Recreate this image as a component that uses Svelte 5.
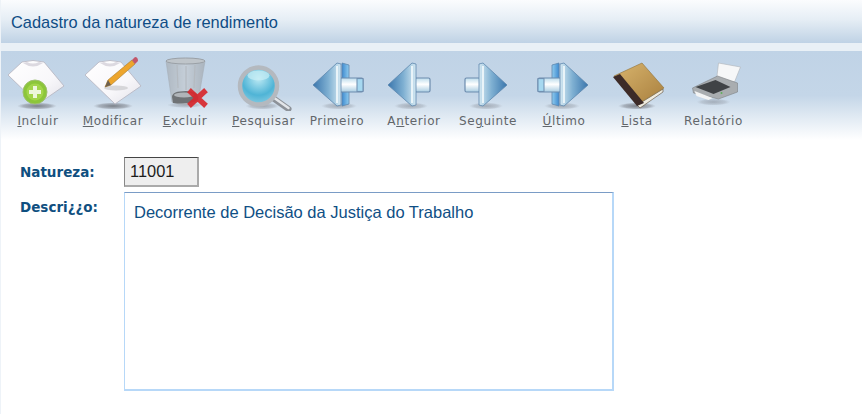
<script>
  // x = centre of the tool on the page, key = index of the underlined letter
  const tools = [
    { label: 'Incluir', x: 38, key: 0, icon: 'add' },
    { label: 'Modificar', x: 113, key: 0, icon: 'edit' },
    { label: 'Excluir', x: 185, key: 0, icon: 'trash' },
    { label: 'Pesquisar', x: 263.5, key: 0, icon: 'search' },
    { label: 'Primeiro', x: 337, key: -1, icon: 'first' },
    { label: 'Anterior', x: 414, key: 1, icon: 'prev' },
    { label: 'Seguinte', x: 488, key: 2, icon: 'next' },
    { label: 'Último', x: 564, key: 0, icon: 'last' },
    { label: 'Lista', x: 637, key: 0, icon: 'book' },
    { label: 'Relatório', x: 713.5, key: -1, icon: 'printer' }
  ];

  const itemWidth = 72;

  function gapBefore(i) {
    if (i === 0) return tools[0].x - itemWidth / 2 - 1;
    return tools[i].x - tools[i - 1].x - itemWidth;
  }
</script>

{#snippet shadow(cx, rx, opacity = 1, cy = 106)}
  <ellipse {cx} {cy} {rx} ry="3.5" fill="url(#shade)" {opacity} />
{/snippet}

{#snippet paper()}
  <path d="M0 15 L14 2 Q25 -1 36 2 L56 26 L30 44 Z" fill="url(#sheet)" stroke="#b4b3be" stroke-width="0.8" stroke-linejoin="round" />
  <path d="M15 3 Q25 10 35 3 L31 2 Q25 5 19 2 Z" fill="#dcd9e0" />
{/snippet}

{#snippet arrowHead()}
  <path d="M388 85 L412 63 L416 64 L416 105 L412 106 Z" fill="url(#head)" stroke="#5d86ad" stroke-width="0.8" stroke-linejoin="round" />
  <path d="M412 66 L412 103" stroke="#f2f9fc" stroke-width="2" opacity=".85" />
{/snippet}

{#snippet arrowTail(x, w)}
  <rect {x} y="78" width={w} height="14" rx="1.5" fill="url(#tail)" stroke="#6d8cae" stroke-width="1.2" />
{/snippet}

{#snippet doubleArrow()}
  <path d="M417 63 L424 65 V104 L417 106 Z" fill="url(#strip)" stroke="#5d86ad" stroke-width=".8" />
  {@render arrowTail(414, 24)}
  <rect x="432" y="78.600" width="6" height="12.800" fill="#a6d8f0" stroke="#6d8cae" />
  {@render arrowHead()}
{/snippet}

<main class="page">
  <header class="title-bar">Cadastro da natureza de rendimento</header>

  <nav class="toolbar">
    {#each tools as tool, i}
      <div class="tool" style:margin-left="{gapBefore(i)}px">
        <svg class="icon" width={itemWidth} height="60" viewBox="{tool.x - itemWidth / 2} 51 {itemWidth} 60">
          {#if i === 0}
            <defs>
              <radialGradient id="shade">
                <stop offset="0" stop-color="#55565c" stop-opacity=".7" />
                <stop offset=".7" stop-color="#6a6c74" stop-opacity=".4" />
                <stop offset="1" stop-color="#8a8f99" stop-opacity="0" />
              </radialGradient>
              <linearGradient id="sheet" x1="0" y1="0" x2="1" y2="1">
                <stop offset="0" stop-color="#ffffff" />
                <stop offset=".6" stop-color="#f8f7fa" />
                <stop offset="1" stop-color="#e2e1e8" />
              </linearGradient>
              <linearGradient id="head" x1="0" y1="0" x2="1" y2="0">
                <stop offset="0" stop-color="#3a76ad" />
                <stop offset=".55" stop-color="#7fb0d2" />
                <stop offset="1" stop-color="#d4e8f2" />
              </linearGradient>
              <linearGradient id="strip" x1="0" y1="0" x2="1" y2="0">
                <stop offset="0" stop-color="#3f8bd0" />
                <stop offset="1" stop-color="#8fcbee" />
              </linearGradient>
              <linearGradient id="tail" x1="0" y1="0" x2="0" y2="1">
                <stop offset="0" stop-color="#bcdcec" />
                <stop offset=".45" stop-color="#ffffff" />
                <stop offset="1" stop-color="#a9cde2" />
              </linearGradient>
              <radialGradient id="lens" cx=".5" cy=".3" r=".75">
                <stop offset="0" stop-color="#bdeaf4" />
                <stop offset=".6" stop-color="#4fb4d6" />
                <stop offset="1" stop-color="#8fcfe4" />
              </radialGradient>
              <linearGradient id="bin" x1="0" y1="0" x2="1" y2="0">
                <stop offset="0" stop-color="#a7adb3" />
                <stop offset=".5" stop-color="#c6ccd2" />
                <stop offset="1" stop-color="#a2a8ae" />
              </linearGradient>
              <linearGradient id="cover" x1="0" y1="0" x2="1" y2="1">
                <stop offset="0" stop-color="#d9b56e" />
                <stop offset="1" stop-color="#a87f3e" />
              </linearGradient>
            </defs>
          {/if}

          {#if tool.icon === 'add'}
            {@render shadow(37, 20)}
            <g transform="translate(8 60)">{@render paper()}</g>
            <circle cx="35" cy="92" r="12" fill="#8cc63a" stroke="#9fc070" />
            <circle cx="35" cy="92" r="8.500" fill="#a3d54b" />
            <path d="M35 86 V98 M29 92 H41" stroke="#eef7dc" stroke-width="4" />
          {:else if tool.icon === 'edit'}
            {@render shadow(113, 20)}
            <g transform="translate(85 60)">{@render paper()}</g>
            <ellipse cx="116" cy="88" rx="12" ry="2.500" fill="#c9c9cc" opacity=".7" />
            <path d="M105 87 L108 80 L132 60 L135 64 L111 85 Z" fill="#eda52c" stroke="#a87a2a" stroke-width=".6" />
            <path d="M105 87 L108 80 L111 85 Z" fill="#6e6152" />
            <path d="M132 60 L135 57 Q138 57 138 61 L135 64 Z" fill="#c2566a" />
          {:else if tool.icon === 'trash'}
            <ellipse cx="185" cy="105" rx="18" ry="3" fill="url(#shade)" opacity=".5" />
            <path d="M166 61 L172 102 Q185 107 198 102 L205 61 Z" fill="url(#bin)" opacity=".7" stroke="#9ba0a5" stroke-width=".6" />
            <ellipse cx="185.500" cy="61" rx="19.500" ry="3" fill="#bfc5ca" stroke="#9aa0a6" />
            <path d="M177 65 L178 88 M186 66 V90 M195 65 L194 88" stroke="#b4bac0" stroke-width="1.200" />
            <path d="M172 97 Q172 91 186 91 Q198 91 198 97 L198 100 Q190 105 173 103 Z" fill="#6f7275" />
            <ellipse cx="184" cy="95" rx="10" ry="2.500" fill="#b0b4b8" />
            <path d="M191 92 L204 104 M204 92 L191 104" stroke="#d8282e" stroke-width="5.500" stroke-linecap="square" opacity=".92" />
          {:else if tool.icon === 'search'}
            {@render shadow(262, 17, 0.6)}
            <path d="M271 97 L288 109" stroke="#8d9299" stroke-width="6" stroke-linecap="round" />
            <path d="M271 96 L288 108" stroke="#e3e6ea" stroke-width="2.500" stroke-linecap="round" />
            <circle cx="258" cy="86" r="18.500" fill="url(#lens)" stroke="#b4b9bf" stroke-width="4.500" />
            <ellipse cx="258" cy="75.500" rx="11" ry="5" fill="#c9eef5" opacity=".7" />
          {:else if tool.icon === 'first'}
            {@render shadow(339, 18, 0.55)}
            <g transform="translate(-75 0)">{@render doubleArrow()}</g>
          {:else if tool.icon === 'prev'}
            {@render shadow(411, 17, 0.55)}
            {@render arrowTail(415, 15)}
            {@render arrowHead()}
          {:else if tool.icon === 'next'}
            {@render shadow(486, 17, 0.55)}
            <g transform="translate(895 0) scale(-1 1)">
              {@render arrowTail(415, 15)}
              {@render arrowHead()}
            </g>
          {:else if tool.icon === 'last'}
            {@render shadow(562, 18, 0.55)}
            <g transform="translate(976 0) scale(-1 1)">{@render doubleArrow()}</g>
          {:else if tool.icon === 'book'}
            {@render shadow(637, 19)}
            <path d="M637 105 L663 89 L663 92 L640 108 Z" fill="#efece0" stroke="#5a4a38" stroke-width=".6" />
            <path d="M614 76 L642 63 L664 88 L638 104 Z" fill="url(#cover)" stroke="#8f7038" stroke-width=".6" />
            <path d="M613 77 L637 106 L644 103 L620 74 Z" fill="#3d2b28" />
          {:else}
            <ellipse cx="713" cy="102" rx="17" ry="3.500" fill="url(#shade)" opacity=".5" />
            <path d="M718 63 L740 67 L734 82 L716 80 Z" fill="#f6f7f8" stroke="#aeb3b8" stroke-width=".6" />
            <path d="M692 88 L717 76 L737 83 L737 92 L718 99 L693 93 Z" fill="#a9adb0" stroke="#7d8285" stroke-width=".6" />
            <path d="M695 87 L715 80 L730 87 L713 94 Z" fill="#404346" />
            <path d="M694 91 L712 98 L708 100 L696 96 Z" fill="#f3f4f4" />
            <circle cx="721" cy="93" r="1" fill="#5fae5a" />
          {/if}
        </svg>
        <span class="tool-label">
          {#if tool.key >= 0}{tool.label.slice(0, tool.key)}<u>{tool.label[tool.key]}</u>{tool.label.slice(tool.key + 1)}{:else}{tool.label}{/if}
        </span>
      </div>
    {/each}
  </nav>

  <form class="form">
    <label for="natureza">Natureza:</label>
    <input id="natureza" value="11001" readonly />
    <label for="descricao">Descri¿¿o:</label>
    <textarea id="descricao" readonly>Decorrente de Decisão da Justiça do Trabalho</textarea>
  </form>
</main>

<style>
  :global(body) {
    background: #fff;
    font-family: "Liberation Sans", Arial, sans-serif;
  }

  .page {
    height: 414px;
    overflow: hidden;
    box-sizing: border-box;
    border-left: 1px solid #eef3f8;
  }

  .title-bar {
    height: 43px;
    box-sizing: border-box;
    padding: 13px 0 0 10px;
    font-size: 16.4px;
    line-height: 19px;
    color: #0f4d85;
    background: linear-gradient(#fbfcfe, #e6eef5 45%, #bfd2e5);
  }

  .toolbar {
    display: flex;
    height: 89px;
    margin-top: 8px;
    box-shadow: 0 -8px 0 #e9f0f6;
    background: linear-gradient(#c0d3e6, #c4d6e8 50%, #ffffff);
  }

  .tool {
    flex: none;
    width: 72px;
    display: flex;
    flex-direction: column;
    align-items: center;
  }

  .icon {
    display: block;
    flex: none;
  }

  .tool-label {
    margin-top: 3px;
    font-family: "DejaVu Sans", Verdana, sans-serif;
    font-size: 12px;
    line-height: 14px;
    letter-spacing: 0.6px;
    color: #62666a;
    white-space: nowrap;
  }

  .form {
    display: grid;
    grid-template-columns: 104px 490px;
    grid-template-rows: 30px 199px;
    row-gap: 5px;
    margin: 17px 0 0 19px;
  }

  label {
    font-family: "DejaVu Sans", Verdana, sans-serif;
    font-weight: bold;
    font-size: 13.500px;
    line-height: 15px;
    color: #0f4f80;
    padding-top: 8px;
  }

  label[for='descricao'] {
    padding-top: 8px;
  }

  input {
    width: 75px;
    height: 30px;
    box-sizing: border-box;
    padding: 0 0 0 5px;
    border: 1px solid;
    border-color: #444 #aaa #aaa #888;
    border-width: 1px 2px 2px 1px;
    background: #eee;
    font: 16.400px "Liberation Sans", Arial, sans-serif;
    color: #1c1c1c;
    outline: none;
  }

  textarea {
    width: 490px;
    height: 199px;
    box-sizing: border-box;
    padding: 10px 9px;
    border: 1px solid #b7d8f8;
    border-top-color: #7a9cc6;
    border-right-width: 2px;
    border-bottom-width: 2px;
    background: #fff;
    font: 16.500px "Liberation Sans", Arial, sans-serif;
    line-height: 18px;
    color: #0f4f85;
    resize: none;
    outline: none;
  }
</style>
